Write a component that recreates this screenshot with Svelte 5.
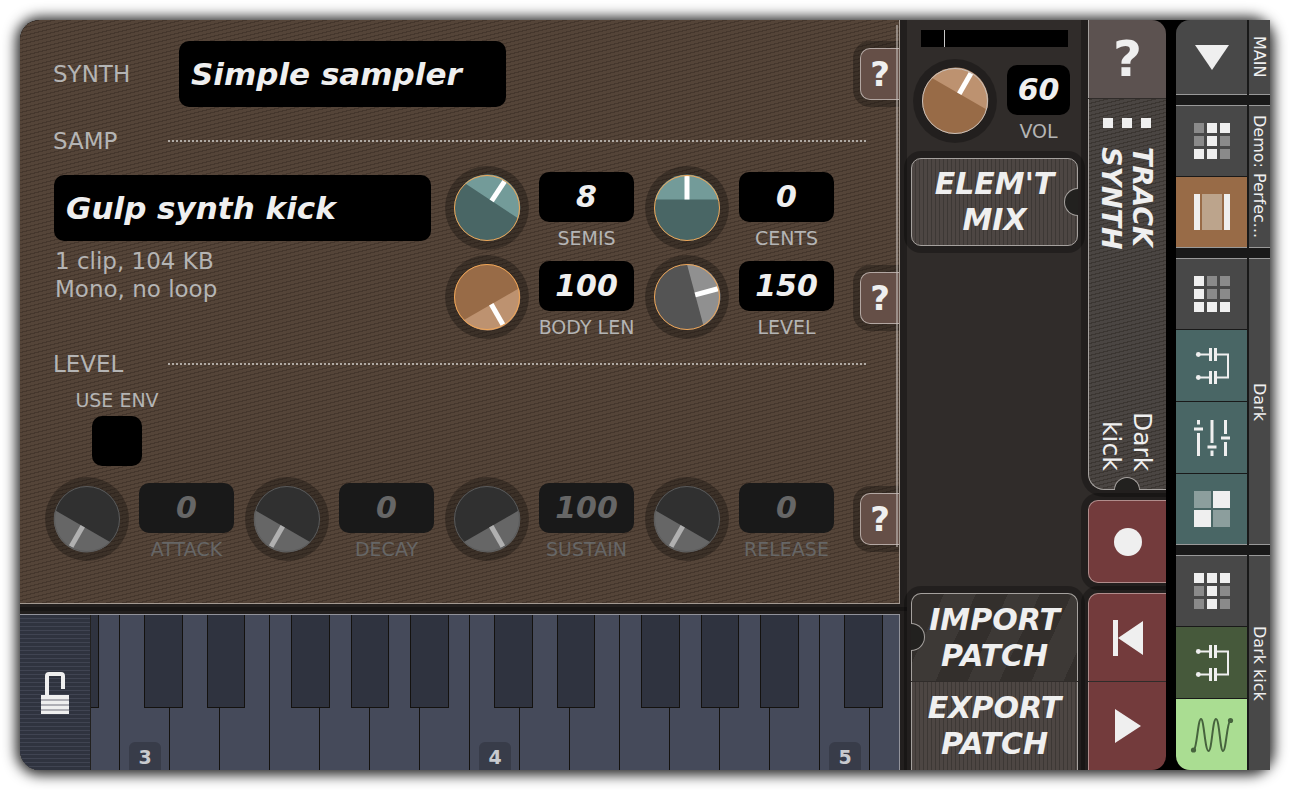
<script>
  let useEnv = false

  let sampKnobs = [
    { name: 'SEMIS', value: 8, min: -36, max: 36, tone: 'teal' },
    { name: 'CENTS', value: 0, min: -100, max: 100, tone: 'teal' },
    { name: 'BODY LEN', value: 100, min: 0, max: 100, tone: 'amber' },
    { name: 'LEVEL', value: 150, min: 0, max: 200, tone: 'grey' }
  ]

  let envKnobs = [
    { name: 'ATTACK', value: 0, min: 0, max: 100, tone: 'off' },
    { name: 'DECAY', value: 0, min: 0, max: 100, tone: 'off' },
    { name: 'SUSTAIN', value: 100, min: 0, max: 100, tone: 'off' },
    { name: 'RELEASE', value: 0, min: 0, max: 100, tone: 'off' }
  ]

  let volume = { name: 'VOL', value: 60, min: 0, max: 100, tone: 'vol' }

  // offset and width of the black key that hangs off each white key
  const blackKeys = {
    C: [25, 39],
    D: [38, 38],
    F: [22, 39],
    G: [32, 38],
    A: [41, 39]
  }

  const keys = ['A2', 'B2']
  for (const octave of [3, 4, 5]) {
    for (const note of 'CDEFGAB') keys.push(note + octave)
  }

  const groups = [
    { title: 'MAIN', cells: [{ icon: 'down', label: 'Menu' }] },
    {
      title: 'Demo: Perfec...',
      cells: [
        { icon: 'grid', label: 'Song grid', dots: '011010110' },
        { icon: 'columns', label: 'Song layout', tone: 'amber' }
      ]
    },
    {
      title: 'Dark',
      cells: [
        { icon: 'grid', label: 'Kit grid', dots: '100100111' },
        { icon: 'circuit', label: 'Kit effects', tone: 'teal' },
        { icon: 'faders', label: 'Kit mixer', tone: 'teal' },
        { icon: 'checker', label: 'Kit pads', tone: 'teal' }
      ]
    },
    {
      title: 'Dark kick',
      cells: [
        { icon: 'grid', label: 'Track grid', dots: '111010010' },
        { icon: 'circuit', label: 'Track effects', tone: 'green' },
        { icon: 'wave', label: 'Track synth', tone: 'lime' }
      ]
    }
  ]

  function angle(knob) {
    return -150 + (300 * (knob.value - knob.min)) / (knob.max - knob.min)
  }
</script>

{#snippet dial(knob)}
  <label class="knob {knob.tone}">
    <span class="dial">
      <svg viewBox="-42 -42 84 84">
        <circle class="ring" r="42" />
        <circle class="face" r="33" />
        <g transform="rotate({angle(knob)})">
          <path class="lit" d="M-32-8.5A33 33 0 0 1 32-8.5Z" />
          <path class="hand" d="M0-8.5V-32" />
        </g>
        <circle class="rim" r="32.5" />
      </svg>
      <input type="range" min={knob.min} max={knob.max} bind:value={knob.value} disabled={knob.tone === 'off'} />
    </span>
    <span class="readout">
      <output class="lcd">{knob.value}</output>
      <span class="caption">{knob.name}</span>
    </span>
  </label>
{/snippet}

<main class="device">
  <div class="screen">
    <div class="left">
      <section class="editor">
        <div class="row synth">
          <h2>SYNTH</h2>
          <button class="lcd name">Simple sampler</button>
          <button class="help" aria-label="Synth help">?</button>
        </div>

        <div class="head">
          <h2>SAMP</h2>
          <span class="dots"></span>
        </div>
        <div class="row samp">
          <div class="sample">
            <button class="lcd name wide">Gulp synth kick</button>
            <p>1 clip, 104 KB<br />Mono, no loop</p>
          </div>
          <div class="knobs">
            {#each sampKnobs as knob (knob.name)}
              {@render dial(knob)}
            {/each}
          </div>
          <button class="help low" aria-label="Sample help">?</button>
        </div>

        <div class="head">
          <h2>LEVEL</h2>
          <span class="dots"></span>
        </div>
        <label class="env">
          <span>USE ENV</span>
          <input type="checkbox" bind:checked={useEnv} />
        </label>
        <div class="row adsr">
          <div class="knobs four">
            {#each envKnobs as knob (knob.name)}
              {@render dial(knob)}
            {/each}
          </div>
          <button class="help" aria-label="Envelope help">?</button>
        </div>
        <span class="scrollbar"></span>
      </section>

      <section class="keyboard">
        <button class="lock" aria-label="Lock keyboard">
          <svg width="28" height="42" viewBox="0 0 28 42">
            <path d="M6 23V4Q6 2 8 2H20Q22 2 22 4V17" fill="none" stroke="#efefef" stroke-width="4" />
            <path d="M0 23H28V42H0Z" fill="#efefef" />
            <path d="M0 28H28M0 33H28M0 38H28" stroke="#9a9aa2" stroke-width="1.4" />
          </svg>
        </button>
        <div class="keys">
          {#each keys as key (key)}
            <div class="slot">
              <button class="white" aria-label={key}>
                {#if key[0] === 'C'}<span class="octave">{key[1]}</span>{/if}
              </button>
              {#if blackKeys[key[0]]}
                <button
                  class="black"
                  aria-label="{key} sharp"
                  style="left: {blackKeys[key[0]][0]}px; width: {blackKeys[key[0]][1]}px"
                ></button>
              {/if}
            </div>
          {/each}
        </div>
      </section>
    </div>

    <section class="side">
      <div class="meter"><span></span></div>
      {@render dial(volume)}
      <button class="patch ribbed mix">ELEM'T<br />MIX<i class="notch right"></i></button>
      <div class="stack">
        <button class="patch striped">IMPORT<br />PATCH<i class="notch left-edge"></i></button>
        <button class="patch ribbed">EXPORT<br />PATCH</button>
      </div>
    </section>

    <section class="track">
      <div class="tall">
        <button class="big-help" aria-label="Track help">?</button>
        <button class="title">
          <span class="squares"><i></i><i></i><i></i></span>
          <strong>TRACK<br />SYNTH</strong>
          <span class="sub">Dark<br />kick</span>
          <i class="notch bottom"></i>
        </button>
      </div>
      <button class="red record" aria-label="Record">
        <svg width="36" height="36"><circle cx="18" cy="18" r="14" /></svg>
      </button>
      <div class="transport">
        <button class="red" aria-label="Rewind">
          <svg width="36" height="36"><path d="M3 0H8V36H3ZM33 1V35L8 18Z" /></svg>
        </button>
        <button class="red" aria-label="Play">
          <svg width="36" height="36"><path d="M5 1V35L31 18Z" /></svg>
        </button>
      </div>
    </section>

    <nav class="nav">
      {#each groups as group (group.title)}
        <div class="group">
          <div class="cells">
            {#each group.cells as cell}
              <button class="cell {cell.tone ?? ''}" aria-label={cell.label}>
                <svg width="36" height="36" viewBox="0 0 36 36">
                  {#if cell.icon === 'down'}
                    <path d="M1 6H35L18 31Z" />
                  {:else if cell.icon === 'grid'}
                    {#each cell.dots as dot, i}
                      <rect x={(i % 3) * 13} y={Math.floor(i / 3) * 13} width="10" height="10" class:dim={dot === '0'} />
                    {/each}
                  {:else if cell.icon === 'columns'}
                    <path d="M0 0H6V36H0ZM30 0H36V36H30Z" />
                    <path class="dim" d="M8 0H28V36H8Z" />
                  {:else if cell.icon === 'circuit'}
                    <g class="line">
                      <path d="M4 6.5H16M22 6.5H34V29.5H22M16 29.5H4" stroke-width="2" />
                      <path d="M16.5 0V13M21.5 0V13M16.5 23V36M21.5 23V36" stroke-width="3" />
                    </g>
                    <circle cx="4.3" cy="6.5" r="2.4" />
                    <circle cx="4.3" cy="29.5" r="2.4" />
                  {:else if cell.icon === 'faders'}
                    <path
                      class="line"
                      stroke-width="3"
                      d="M4.5 0V4.5M4.5 13V36M18 0V23M18 30.5V36M31.5 0V14M31.5 22V36M0 9H9M13.5 27H22.5M27 18H36"
                    />
                  {:else if cell.icon === 'checker'}
                    <path d="M19 0H36V17H19ZM0 19H17V36H0Z" />
                    <path class="dim" d="M0 0H17V17H0ZM19 19H36V36H19Z" />
                  {:else}
                    <path
                      class="line"
                      stroke-width="2"
                      d="M0 33C3 30 4 2 7 2S11 34 14.5 34S18.5 2 22 2S26 34 29 34S33 6 36 4"
                    />
                    <circle cx="-.5" cy="33" r="2.6" />
                    <circle cx="36.5" cy="3.5" r="2.6" />
                  {/if}
                </svg>
              </button>
            {/each}
          </div>
          <div class="group-title">{group.title}</div>
        </div>
      {/each}
    </nav>
  </div>
</main>

<style>
  :global(body) {
    background: #fff;
  }

  .device {
    --shade: rgba(0, 0, 0, 0.28);
    --light: #efefef;
    --text: #b4b4b4;
    margin: 20px;
    border-radius: 20px;
    background: #444;
    box-shadow: 0 1px 13px 4px rgba(0, 0, 0, 0.85);
    font-family: 'DejaVu Sans', sans-serif;
    color: var(--text);
  }

  .screen {
    display: grid;
    grid-template-columns: minmax(880px, 1fr) 188px 78px 104px;
    min-height: calc(100vh - 40px);
    border-radius: 20px 0 0 20px;
    background: #000;
    overflow: hidden;
  }

  button {
    margin: 0;
    padding: 0;
    border: 0;
    font: inherit;
    color: var(--light);
    cursor: pointer;
  }

  svg {
    display: block;
    overflow: visible;
    fill: var(--light);
  }

  h2 {
    margin: 0;
    font-size: 23px;
    line-height: 28px;
    font-weight: normal;
  }

  .left {
    position: relative;
    z-index: 1;
    display: flex;
    flex-direction: column;
    gap: 10px;
    min-width: 0;
    background: #302c2a;
  }

  .editor {
    position: relative;
    flex: 1;
    padding: 21px 0 42px 25px;
    border: solid #a39a92;
    border-width: 0 1px 1px 0;
    box-shadow: 0 0 0 7px var(--shade);
    background: linear-gradient(to bottom right, #45372d 15%, #544438 15% 50%, #45372d 50% 65%, #544438 65%) 0 0 / 16px 4px;
    overflow: hidden;
  }

  .row {
    display: flex;
  }

  .synth,
  .adsr {
    align-items: center;
  }

  .synth,
  .head {
    padding-left: 8px;
  }

  .synth h2 {
    width: 126px;
  }

  .head {
    display: flex;
    align-items: center;
    margin: 11px 33px 11px 0;
  }

  .synth + .head {
    margin-top: 20px;
  }

  .head h2 {
    width: 115px;
  }

  .dots {
    flex: 1;
    height: 2px;
    background: repeating-linear-gradient(90deg, #b0aaa4 0 2px, transparent 2px 4px);
  }

  .lcd {
    display: block;
    height: 50px;
    border-radius: 10px;
    background: #000;
    color: var(--light);
    font-size: 30px;
    line-height: 50px;
    font-weight: bold;
    font-style: oblique;
    text-align: center;
  }

  .name {
    width: 327px;
    height: 66px;
    padding: 0 12px;
    font-size: 31px;
    text-align: left;
  }

  .wide {
    width: 377px;
  }

  .sample {
    margin: 9px 14px 0 9px;
  }

  .sample p {
    margin: 6px 1px;
    font-size: 23px;
    line-height: 28px;
  }

  .knobs {
    display: grid;
    grid-template-columns: auto auto;
    gap: 5px 11px;
  }

  .four {
    grid-template-columns: repeat(4, auto);
  }

  .knob {
    display: flex;
    gap: 10px;
  }

  .dial {
    position: relative;
    width: 84px;
    height: 84px;
  }

  .dial input {
    position: absolute;
    inset: 0;
    width: 100%;
    height: 100%;
    margin: 0;
    opacity: 0;
  }

  .ring {
    fill: var(--shade);
  }

  .face {
    fill: #496665;
  }

  .lit {
    fill: #739b99;
  }

  .hand {
    stroke: #fff;
    stroke-width: 5;
  }

  .rim {
    fill: none;
    stroke: #f0a657;
    stroke-width: 1;
  }

  .knob.amber .face,
  .knob.vol .face {
    fill: #986b47;
  }

  .knob.amber .lit,
  .knob.vol .lit {
    fill: #bd9270;
  }

  .knob.vol .rim {
    stroke: #c8c0ba;
  }

  .knob.grey .face {
    fill: #545454;
  }

  .knob.grey .lit {
    fill: #909090;
  }

  .off .face {
    fill: #303030;
  }

  .off .lit {
    fill: #666;
  }

  .off .hand {
    stroke: #b0b0b0;
  }

  .off .rim {
    stroke: #5a5a5a;
  }

  .readout {
    width: 95px;
    padding-top: 6px;
  }

  .caption {
    display: flex;
    justify-content: center;
    margin-top: 4px;
    font-size: 19px;
    line-height: 24px;
    white-space: nowrap;
  }

  .off .lcd {
    background: #191919;
    color: #666;
  }

  .off .caption {
    color: #666;
  }

  .help {
    width: 39px;
    height: 52px;
    margin-left: auto;
    border: solid #b3a7a2;
    border-width: 1px 0 1px 1px;
    border-radius: 10px 0 0 10px;
    background: #654f47;
    box-shadow: 0 0 0 7px var(--shade);
    font-size: 34px;
    font-weight: bold;
  }

  .low {
    align-self: flex-end;
    margin-bottom: 15px;
  }

  .env {
    display: flex;
    flex-direction: column;
    align-items: center;
    gap: 4px;
    width: 84px;
    margin: -1px 0 11px 30px;
    font-size: 19px;
    line-height: 24px;
  }

  .env input {
    appearance: none;
    width: 50px;
    height: 50px;
    margin: 0;
    border-radius: 10px;
    background: #000;
  }

  .env input:checked {
    background: #739b99;
  }

  .scrollbar {
    position: absolute;
    top: 5px;
    right: 1px;
    width: 2px;
    height: 522px;
    background: rgba(200, 195, 190, 0.55);
  }

  .keyboard {
    display: flex;
    height: 156px;
    box-sizing: border-box;
    border: solid #92939b;
    border-width: 1px 1px 0 0;
    box-shadow: 0 0 0 7px var(--shade);
    background: #454a5a;
  }

  .lock {
    display: grid;
    place-items: center;
    width: 71px;
    border-right: 1px solid #22211f;
    background: repeating-linear-gradient(#2f333f 0 3px, #404452 3px 4px);
  }

  .keys {
    display: flex;
    flex: 1;
    width: 0;
    overflow: hidden;
  }

  .slot {
    position: relative;
    flex: none;
    width: 50px;
  }

  .slot:first-child {
    margin-left: -72px;
  }

  .white {
    display: flex;
    align-items: flex-end;
    width: 50px;
    height: 100%;
    border-left: 1px solid #14120f;
    background: #454a5a;
  }

  .octave {
    width: 32px;
    height: 28px;
    margin-left: 9px;
    border-radius: 6px 6px 0 0;
    background: #383c49;
    color: #c8cace;
    font-size: 19px;
    line-height: 30px;
    font-weight: bold;
  }

  .black {
    position: absolute;
    z-index: 1;
    top: 0;
    height: 93px;
    border: 1px solid #14120f;
    border-top: 0;
    background: #2f333f;
  }

  .side {
    display: flex;
    flex-direction: column;
    padding: 10px 10px 0 11px;
    background: #302c2a;
  }

  .meter {
    height: 17px;
    margin: 0 10px 12px;
    background: #000;
  }

  .meter span {
    display: block;
    width: 23px;
    height: 100%;
    border-right: 1px solid #c8c8c8;
  }

  .side .knob {
    margin-left: 2px;
  }

  .side .readout {
    width: 63px;
  }

  .patch {
    position: relative;
    display: block;
    width: 100%;
    height: 88px;
    border: 1px solid #a5a19e;
    font-size: 30px;
    line-height: 36px;
    font-weight: bold;
    font-style: oblique;
  }

  .ribbed {
    background: repeating-linear-gradient(90deg, #4d4643 0 3px, #3d3835 3px 4px);
  }

  .striped {
    border-bottom: 0;
    background: repeating-linear-gradient(115deg, #332f2c 0 29px, #3d3936 29px 58px);
  }

  .mix {
    margin-top: 15px;
    border-radius: 10px;
    box-shadow: 0 0 0 7px var(--shade);
  }

  .stack {
    display: grid;
    gap: 1px;
    margin-top: auto;
    border-radius: 10px 10px 0 0;
    box-shadow: 0 0 0 7px var(--shade);
  }

  .stack .striped {
    border-radius: 10px 10px 0 0;
  }

  .stack .ribbed {
    border-width: 0 1px;
  }

  .notch {
    position: absolute;
    box-sizing: border-box;
    width: 14px;
    height: 28px;
    border: 1px solid #a5a19e;
    background: #22211f;
  }

  .right {
    top: 29px;
    right: -1px;
    border-right: 0;
    border-radius: 14px 0 0 14px;
  }

  .left-edge {
    top: 29px;
    left: -1px;
    border-left: 0;
    border-radius: 0 14px 14px 0;
  }

  .bottom {
    left: 25px;
    bottom: -1px;
    width: 26px;
    height: 13px;
    border-bottom: 0;
    border-radius: 13px 13px 0 0;
  }

  /* black patches sit behind the two rounded outer corners */
  .track {
    position: relative;
    display: flex;
    flex-direction: column;
    gap: 10px;
    background:
      linear-gradient(#000, #000) right top / 14px 14px no-repeat,
      linear-gradient(#000, #000) right bottom / 14px 14px no-repeat,
      #302c2a;
  }

  .tall {
    display: flex;
    flex: 1;
    flex-direction: column;
    gap: 1px;
    border-radius: 0 0 0 16px;
    box-shadow: 0 0 0 7px var(--shade);
  }

  .big-help {
    height: 78px;
    border-left: 1px solid #a5a19e;
    border-radius: 0 14px 0 0;
    background: #5c5250;
    font-size: 50px;
    font-weight: bold;
  }

  .title {
    position: relative;
    display: flex;
    flex: 1;
    flex-direction: column;
    align-items: center;
    padding: 19px 0 18px;
    border: solid #a5a19e;
    border-width: 0 0 1px 1px;
    border-radius: 0 0 0 16px;
    background: linear-gradient(to bottom right, #3b3632 15%, #4a4542 15% 50%, #3b3632 50% 65%, #4a4542 65%) 0 0 / 16px 4px;
  }

  .squares {
    display: flex;
    gap: 9px;
    margin-right: 2px;
  }

  .squares i {
    width: 10px;
    height: 10px;
    background: var(--light);
  }

  .title strong,
  .sub {
    margin-right: 2px;
    writing-mode: vertical-rl;
    font-size: 27px;
    line-height: 31px;
    text-align: left;
  }

  .title strong {
    margin-top: 19px;
    font-style: oblique;
  }

  .sub {
    margin-top: auto;
    font-size: 25px;
    text-align: right;
  }

  .red {
    display: grid;
    place-items: center;
    height: 88px;
    border-left: 1px solid #b08c8b;
    background: #733b3c;
  }

  .record {
    height: 83px;
    border: solid #b08c8b;
    border-width: 1px 0 1px 1px;
    border-radius: 10px 0 0 10px;
    box-shadow: 0 0 0 7px var(--shade);
  }

  .transport {
    display: grid;
    gap: 1px;
    border-radius: 10px 0 0;
    box-shadow: 0 0 0 7px var(--shade);
  }

  .transport .red:first-child {
    border-top: 1px solid #b08c8b;
    border-radius: 10px 0 0;
  }

  .transport .red:last-child {
    border-radius: 0 0 14px;
  }

  .nav {
    position: relative;
    display: flex;
    flex-direction: column;
    gap: 10px;
    margin-left: 10px;
    border-radius: 14px 0 0 14px;
    background: #191919;
    overflow: hidden;
  }

  .group {
    display: grid;
    grid-template-columns: 71px 21px;
    gap: 2px;
  }

  .group:first-child {
    flex: 1;
  }

  .cells {
    display: flex;
    flex-direction: column;
    gap: 1px;
  }

  .cell {
    display: grid;
    flex: 1;
    box-sizing: border-box;
    place-items: center;
    min-height: 71px;
    background: #484848;
  }

  .cell.amber {
    background: #986b47;
  }

  .cell.teal {
    background: #496665;
  }

  .cell.green {
    background: #46593b;
  }

  .cell.lime {
    background: #aadd92;
  }

  .cell.lime svg {
    fill: #46633d;
  }

  .group:not(:first-child) .cell:first-child,
  .group:not(:first-child) .group-title {
    border-top: 1px solid #999;
  }

  .group:not(:last-child) .cell:last-child,
  .group:not(:last-child) .group-title {
    border-bottom: 1px solid #999;
  }

  .dim {
    fill: #8a8a8a;
  }

  .amber .dim {
    fill: #bca48c;
  }

  .teal .dim {
    fill: #8c9e9d;
  }

  .line {
    fill: none;
    stroke: var(--light);
  }

  .lime .line {
    stroke: #46633d;
  }

  .group-title {
    writing-mode: vertical-rl;
    background: #484848;
    color: var(--light);
    font-size: 16px;
    line-height: 21px;
    text-align: center;
    white-space: nowrap;
  }
</style>
